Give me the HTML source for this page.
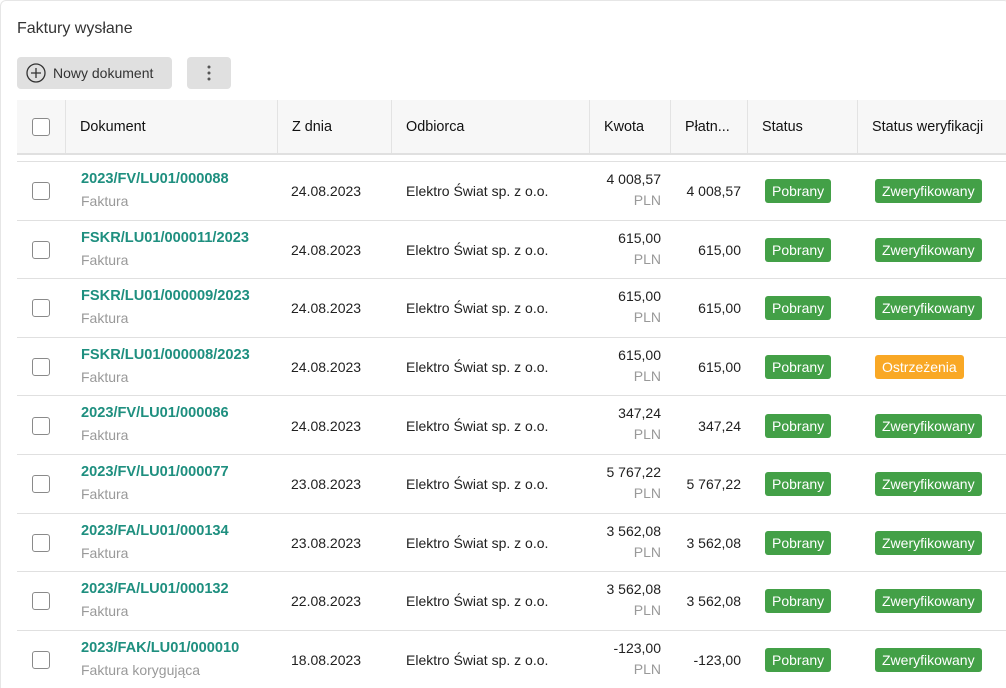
<!DOCTYPE html><html><head><meta charset="utf-8"><style>
html{width:1006px;height:688px;overflow:hidden}
body{margin:0;width:1006px;height:688px;overflow:hidden;background:#fff;font-family:"Liberation Sans",sans-serif;font-size:14px;color:#212121;position:relative}
.card{position:absolute;left:0;top:0;width:1010px;height:688px;border:1px solid #e6e6e6;border-bottom:none;border-radius:6px 6px 0 0;box-sizing:border-box}
.t{position:absolute;left:17px;top:20px;font-size:16px;color:#333}
.btn{position:absolute;top:57px;height:32px;background:#e0e0e0;border-radius:4px}
.hd{position:absolute;left:17px;top:100px;width:989px;height:53px;background:#f7f7f7;border-bottom:2px solid #e0e0e0}
.c{position:absolute;top:0;height:100%;display:flex;align-items:center;box-sizing:border-box}
.hd .c{border-left:1px solid #e3e3e3;padding-left:14px;color:#111;font-size:14.4px}
.cb{width:16px;height:16px;border:1px solid #8a8a8a;border-radius:3px;background:#fff}
.row{position:absolute;left:17px;width:989px;height:58.6px;border-top:1px solid #e0e0e0}
.num{color:#1e8f7f;font-weight:bold;font-size:14.6px}
.sub{color:#999;margin-top:5px}
.badge{color:#fff;border-radius:3px;padding:0 7px;height:24px;line-height:24px;font-size:14px}
.g{background:#43a047}.o{background:#f9a825}
</style></head><body><div class="card"></div>
<div class="t">Faktury wysłane</div>
<div class="btn" style="left:17px;width:155px"><svg style="position:absolute;left:9px;top:6px" width="20" height="20" viewBox="0 0 20 20"><circle cx="10" cy="10" r="9" fill="none" stroke="#333" stroke-width="1.3"/><path d="M10 5v10M5 10h10" stroke="#333" stroke-width="1.3"/></svg><span style="position:absolute;left:36px;top:8px;color:#333">Nowy dokument</span></div>
<div class="btn" style="left:187px;width:44px"><svg style="position:absolute;left:19px;top:7px" width="6" height="18"><circle cx="3" cy="3" r="1.5" fill="#555"/><circle cx="3" cy="9" r="1.5" fill="#555"/><circle cx="3" cy="15" r="1.5" fill="#555"/></svg></div>
<div class="hd">
<div class="c" style="left:0;width:48px;border-left:none;padding-left:15px"><div class="cb"></div></div>
<div class="c" style="left:48px;width:212px">Dokument</div>
<div class="c" style="left:260px;width:114px">Z dnia</div>
<div class="c" style="left:374px;width:198px">Odbiorca</div>
<div class="c" style="left:572px;width:81px">Kwota</div>
<div class="c" style="left:653px;width:77px">Płatn...</div>
<div class="c" style="left:730px;width:110px">Status</div>
<div class="c" style="left:840px;width:149px">Status weryfikacji</div>
</div>
<div id="rows"></div>
<script>
var d=[["2023/FV/LU01/000088","Faktura","24.08.2023","4 008,57","Zweryfikowany"],
["FSKR/LU01/000011/2023","Faktura","24.08.2023","615,00","Zweryfikowany"],
["FSKR/LU01/000009/2023","Faktura","24.08.2023","615,00","Zweryfikowany"],
["FSKR/LU01/000008/2023","Faktura","24.08.2023","615,00","Ostrzeżenia"],
["2023/FV/LU01/000086","Faktura","24.08.2023","347,24","Zweryfikowany"],
["2023/FV/LU01/000077","Faktura","23.08.2023","5 767,22","Zweryfikowany"],
["2023/FA/LU01/000134","Faktura","23.08.2023","3 562,08","Zweryfikowany"],
["2023/FA/LU01/000132","Faktura","22.08.2023","3 562,08","Zweryfikowany"],
["2023/FAK/LU01/000010","Faktura korygująca","18.08.2023","-123,00","Zweryfikowany"]];
var h="";d.forEach(function(r,i){var top=161+i*58.6;
h+='<div class="row" style="top:'+top+'px;height:'+(i==8?26:58.6)+'px;overflow:visible">'+
'<div class="c" style="left:15px;height:58.6px"><div class="cb"></div></div>'+
'<div class="c" style="left:64px;height:58.6px;display:block;padding-top:9px"><div class="num">'+r[0]+'</div><div class="sub" style="margin-top:6px">'+r[1]+'</div></div>'+
'<div class="c" style="left:274px;height:58.6px">'+r[2]+'</div>'+
'<div class="c" style="left:389px;height:58.6px">Elektro Świat sp. z o.o.</div>'+
'<div class="c" style="left:560px;width:84px;height:58.6px;display:block;text-align:right;padding-top:9px"><div>'+r[3]+'</div><div class="sub" style="margin-top:5px">PLN</div></div>'+
'<div class="c" style="left:650px;width:74px;height:58.6px;justify-content:flex-end">'+r[3]+'</div>'+
'<div class="c" style="left:748px;height:58.6px"><span class="badge g">Pobrany</span></div>'+
'<div class="c" style="left:858px;height:58.6px"><span class="badge '+(r[4]=="Ostrzeżenia"?"o":"g")+'">'+r[4]+'</span></div></div>';});
document.getElementById("rows").innerHTML=h;
</script>
</body></html>
